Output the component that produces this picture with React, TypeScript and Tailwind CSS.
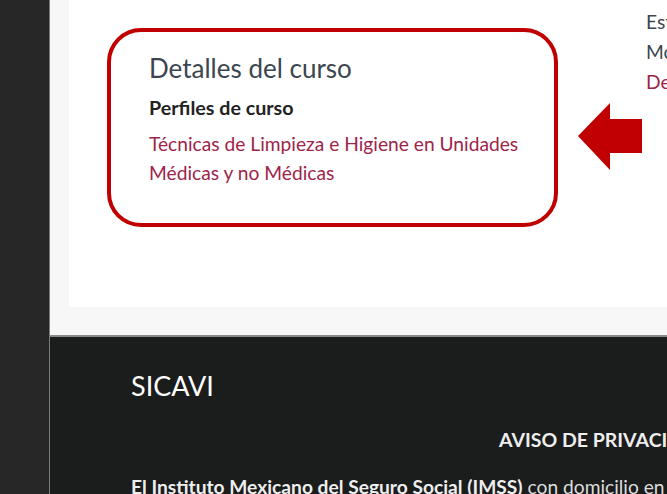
import React from "react";

const CourseDetails = () => (
  <div className="w-[451px] h-[199px] shrink-0 rounded-[34px] border-[4px] border-[#c00000] pl-[38px] pt-[23px]">
    <h3 className="text-[26px] leading-[26px] text-[#3b4650]">Detalles del curso</h3>
    <p className="mt-[15px] text-[19.7px] leading-[24px] font-bold text-[#222]">Perfiles de curso</p>
    <a className="block mt-[9px] text-[19.2px] leading-[29px] text-[#9d2449]">
      Técnicas de Limpieza e Higiene en Unidades
      <br />
      Médicas y no Médicas
    </a>
  </div>
);

const ArrowLeft = () => (
  <svg width="64" height="68" viewBox="0 0 64 68" className="absolute left-[509px] top-[103px]">
    <polygon points="0,33 32,0 32,16 64,16 64,50 32,50 32,67" fill="#c00000" />
  </svg>
);

export default function App() {
  return (
    <div
      className="w-[667px] h-[494px] overflow-hidden flex bg-[#1b1c1c]"
      style={{ fontFamily: "Lato, 'Noto Sans', sans-serif" }}
    >
      <aside className="w-[50px] shrink-0 bg-[#272727] border-r border-[#7a7a7a]" />
      <main className="flex-1 flex flex-col min-w-0">
        <section className="bg-[#f7f7f7] pl-[19px] pb-[28px] border-b-2 border-[#8a8a8a]">
          <div className="relative bg-white h-[307px] flex items-start pl-[38px] overflow-hidden">
            <div className="pt-[28px]">
              <CourseDetails />
            </div>
            <ul className="ml-[88px] pt-[7px] text-[19.2px] leading-[30px] whitespace-nowrap text-[#3b4650]">
              <li>Estatus: Abierto</li>
              <li>Modalidad: En línea</li>
              <li className="text-[#9d2449]">Descargar temario</li>
            </ul>
            <ArrowLeft />
          </div>
        </section>
        <footer className="flex-1 bg-[#1b1c1c] pl-[81px] pt-[34px] text-white whitespace-nowrap">
          <h2 className="text-[27px] leading-[30px]">SICAVI</h2>
          <p className="mt-[27px] pl-[368px] text-[19.5px] leading-[24px] font-bold text-[#eee]">
            AVISO DE PRIVACIDAD INTEGRAL
          </p>
          <p className="mt-[23px] text-[19.2px] leading-[24px] text-[#ddd]">
            <b className="text-[#eee]">El Instituto Mexicano del Seguro Social (IMSS)</b> con domicilio en
            Avenida Paseo de la Reforma
          </p>
        </footer>
      </main>
    </div>
  );
}
